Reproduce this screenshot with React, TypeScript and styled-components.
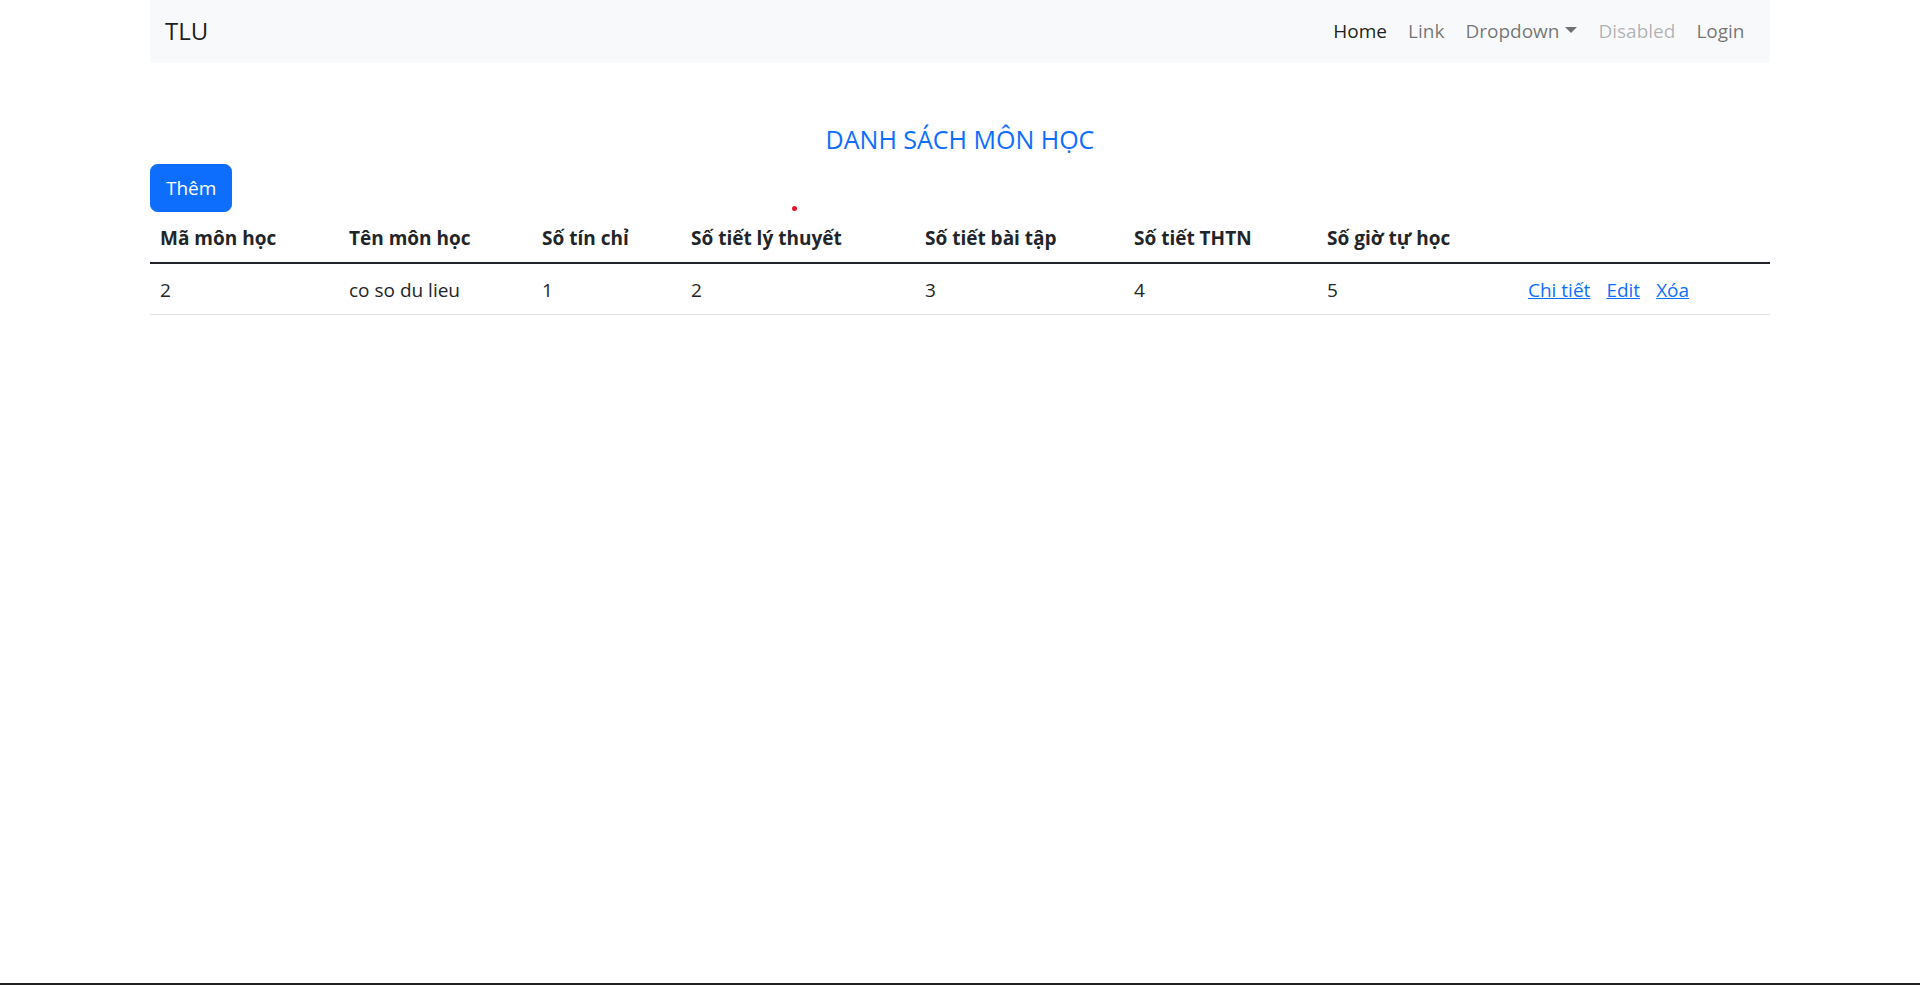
import React from "react";
import styled, { createGlobalStyle } from "styled-components";

const FONT = `"Open Sans", "Noto Sans", sans-serif`;

const GlobalStyle = createGlobalStyle`
  html, body { margin: 0; padding: 0; }
  body {
    font-family: ${FONT};
    font-size: 19px;
    line-height: 30px;
    color: #212529;
    background: #fff;
  }
  * { box-sizing: border-box; }
`;

const Page = styled.div`
  min-height: 100vh;
  display: flex;
  flex-direction: column;
`;

const Main = styled.main`
  flex: 1;
`;

const Container = styled.div`
  width: 1650px;
  margin: 0 auto;
  padding: 0 15px;
  position: relative;
`;

const Navbar = styled.nav`
  height: 63px;
  background: #f8f9fa;
  display: flex;
  align-items: center;
  justify-content: space-between;
  padding: 0 15px 2px;
`;

const Brand = styled.a`
  font-size: 24px;
  color: rgba(0, 0, 0, 0.9);
  text-decoration: none;
`;

const NavList = styled.ul`
  display: flex;
  list-style: none;
  margin: 0;
  padding: 0;
`;

const NavLink = styled.a<{ $state?: "active" | "disabled" }>`
  display: block;
  padding: 0 10.5px;
  text-decoration: none;
  color: ${(p) =>
    p.$state === "active"
      ? "rgba(0,0,0,0.9)"
      : p.$state === "disabled"
      ? "rgba(0,0,0,0.3)"
      : "rgba(0,0,0,0.55)"};
`;

const Caret = styled.span`
  display: inline-block;
  margin-left: 6px;
  vertical-align: 5px;
  border-top: 6px solid currentColor;
  border-left: 6px solid transparent;
  border-right: 6px solid transparent;
`;

const Title = styled.h5`
  margin: 61px 0 10px;
  font-size: 25px;
  font-weight: 400;
  line-height: 30px;
  text-align: center;
  color: #0d6efd;
`;

const AddButton = styled.button`
  display: block;
  height: 48px;
  font-family: ${FONT};
  font-size: 19px;
  line-height: 30px;
  padding: 0 15px;
  border: 1px solid #0d6efd;
  border-radius: 7.5px;
  background: #0d6efd;
  color: #fff;
  cursor: pointer;
`;

const Dot = styled.span`
  position: absolute;
  left: 657px;
  top: 206px;
  width: 5px;
  height: 5px;
  border-radius: 50%;
  background: #e8132b;
`;

const Table = styled.table`
  width: 100%;
  border-collapse: collapse;
  table-layout: fixed;
  margin-bottom: 20px;
`;

const Th = styled.th<{ $w: number }>`
  width: ${(p) => p.$w}px;
  text-align: left;
  padding: 11px 10px 9px;
  line-height: 30px;
  font-weight: 700;
  border-bottom: 2.5px solid #212529;
  white-space: nowrap;
`;

const Td = styled.td`
  padding: 11px 10px 9px;
  line-height: 30px;
  border-bottom: 1.25px solid #dee2e6;
  white-space: nowrap;
`;

const Actions = styled.span`
  display: inline-flex;
  gap: 16px;
`;

const ActionLink = styled.a`
  color: #0d6efd;
  text-decoration: underline;
`;

const Footer = styled.footer`
  height: 2px;
  background: #212121;
`;

const cols = [
  { label: "Mã môn học", w: 189 },
  { label: "Tên môn học", w: 193 },
  { label: "Số tín chỉ", w: 149 },
  { label: "Số tiết lý thuyết", w: 234 },
  { label: "Số tiết bài tập", w: 209 },
  { label: "Số tiết THTN", w: 193 },
  { label: "Số giờ tự học", w: 201 },
  { label: "", w: 252 },
];

const row = ["2", "co so du lieu", "1", "2", "3", "4", "5"];

export default function App() {
  return (
    <Page>
      <GlobalStyle />
      <Main>
        <Container>
          <Navbar>
            <Brand href="#">TLU</Brand>
            <NavList>
              <li><NavLink $state="active" href="#">Home</NavLink></li>
              <li><NavLink href="#">Link</NavLink></li>
              <li><NavLink href="#">Dropdown<Caret /></NavLink></li>
              <li><NavLink $state="disabled">Disabled</NavLink></li>
              <li><NavLink href="#">Login</NavLink></li>
            </NavList>
          </Navbar>
          <Title>DANH SÁCH MÔN HỌC</Title>
          <AddButton>Thêm</AddButton>
          <Dot />
          <Table>
            <thead>
              <tr>
                {cols.map((c, i) => (
                  <Th key={i} $w={c.w}>{c.label}</Th>
                ))}
              </tr>
            </thead>
            <tbody>
              <tr>
                {row.map((v, i) => (
                  <Td key={i}>{v}</Td>
                ))}
                <Td>
                  <Actions>
                    <ActionLink href="#">Chi tiết</ActionLink>
                    <ActionLink href="#">Edit</ActionLink>
                    <ActionLink href="#">Xóa</ActionLink>
                  </Actions>
                </Td>
              </tr>
            </tbody>
          </Table>
        </Container>
      </Main>
      <Footer />
    </Page>
  );
}
